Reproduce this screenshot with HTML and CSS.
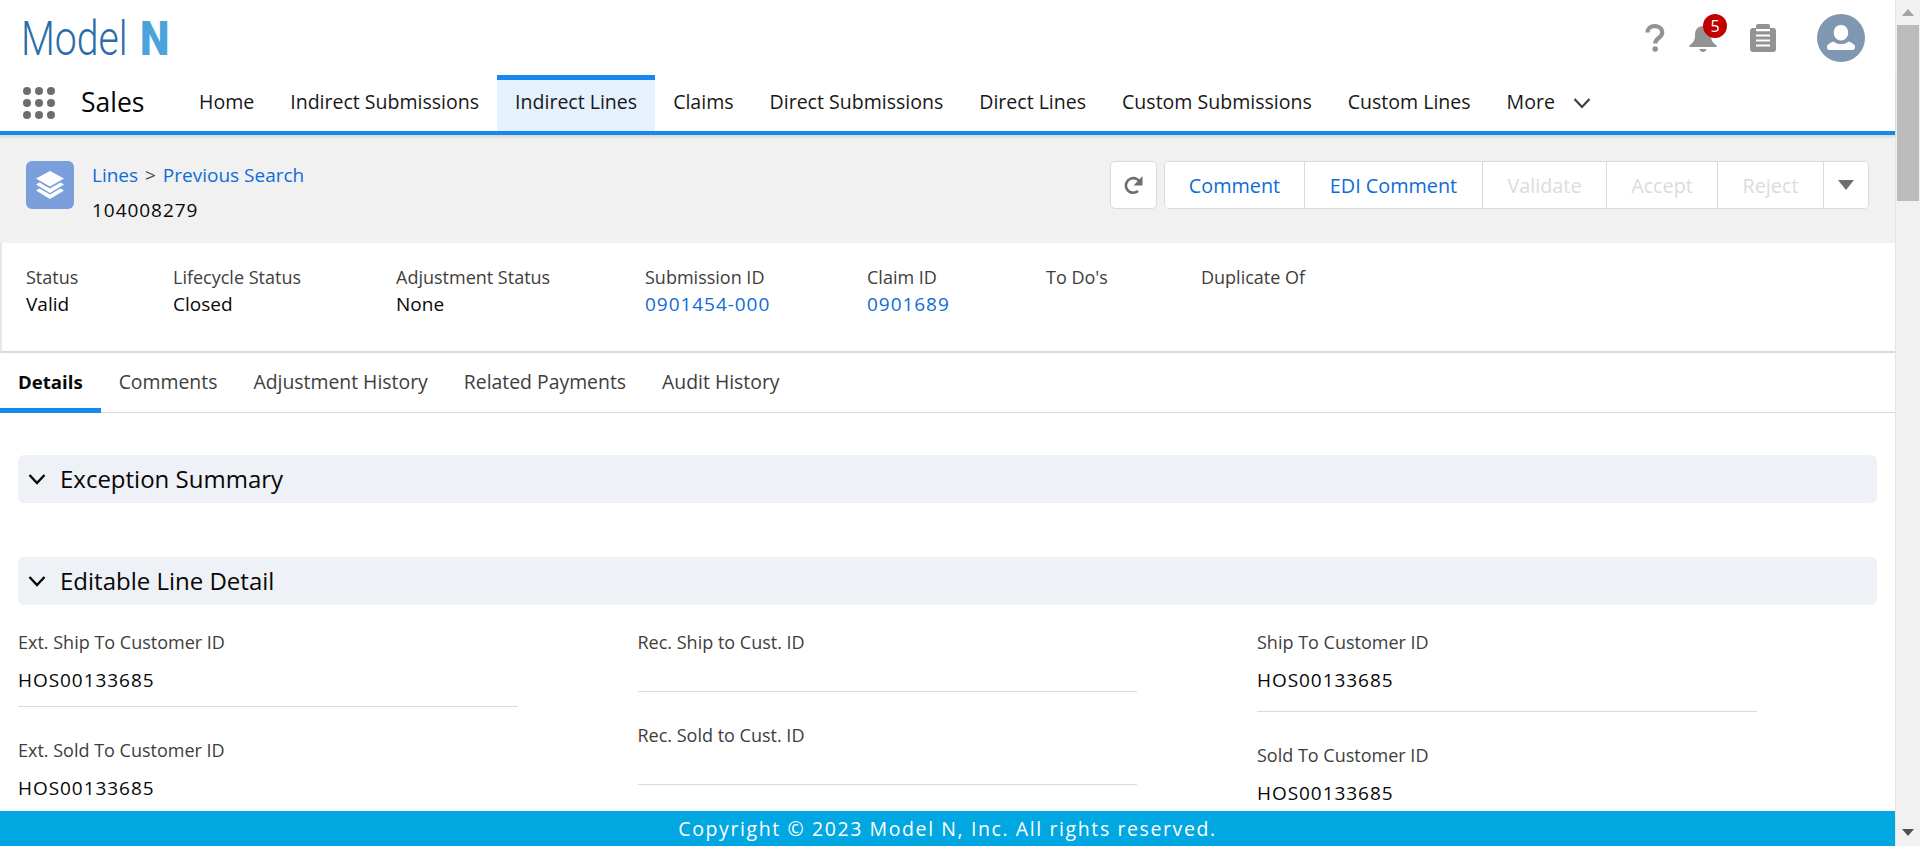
FILE: index.html
```html
<!DOCTYPE html>
<html lang="en">
<head>
<meta charset="utf-8">
<title>Model N - Indirect Lines</title>
<link rel="stylesheet" href="styles.css">
</head>
<body>
<div class="app">
  <div class="main">
    <header class="topbar">
      <div class="logo" aria-label="Model N">
        <span class="logo-model">Model</span>
        <span class="logo-n">N</span>
      </div>
      <div class="top-icons">
        <svg class="ic-help" width="20" height="28" viewBox="0 0 20 28"><path d="M2.500 8.500C2.500 4.500 5.500 2.200 9.600 2.200c4.200 0 7.600 2.400 7.600 6.200 0 5.600-7 5.600-7 11" fill="none" stroke="#939393" stroke-width="4.200"/><circle cx="10.200" cy="25" r="2.800" fill="#939393"/></svg>
        <div class="bell">
          <svg width="28" height="28" viewBox="0 0 28 28"><path d="M14 2c5 0 8 3.500 8 9 0 5 1.500 7.500 4 9.200 1.200.8 1.800 1.300 1.800 2 0 .5-.4.8-1 .8H1.200c-.6 0-1-.3-1-.8 0-.7.6-1.200 1.800-2C4.500 18.500 6 16 6 11c0-5.500 3-9 8-9z" fill="#939393"/><path d="M10.500 25h7c-.4 1.800-1.700 3-3.500 3s-3.100-1.200-3.500-3z" fill="#939393"/></svg>
          <span class="badge">5</span>
        </div>
        <svg class="ic-clip" width="26" height="28" viewBox="0 0 26 28"><path d="M8 0h10a2 2 0 0 1 2 2v2h3a3 3 0 0 1 3 3v18a3 3 0 0 1-3 3H3a3 3 0 0 1-3-3V7a3 3 0 0 1 3-3h3V2a2 2 0 0 1 2-2z" fill="#939393"/><path d="M6 6.200h14M6 11.500h14M6 16.500h14M6 21.500h14" stroke="#fff" stroke-width="2.200"/></svg>
        <svg class="avatar" width="48" height="48" viewBox="0 0 48 48"><circle cx="24" cy="24" r="24" fill="#7f97b0"/><path d="M24 11c4.400 0 7.200 3.400 7.200 7.600 0 4-2.400 8-7.200 8s-7.200-4-7.200-8c0-4.200 2.800-7.600 7.200-7.600zM16.500 27.500c1.800 1.700 4.500 2.600 7.500 2.600s5.700-.9 7.500-2.600c3 1 5.500 2.500 6.500 4.500v1.800c0 1.200-1 2.200-2.200 2.200H12.200c-1.200 0-2.200-1-2.200-2.200V32c1-2 3.500-3.500 6.500-4.500z" fill="#fff"/></svg>
      </div>
    </header>

    <nav class="navbar">
      <svg class="launcher" width="32" height="32" viewBox="0 0 32 32">
        <g fill="#706e6b">
          <circle cx="4" cy="4" r="4"/><circle cx="16" cy="4" r="4"/><circle cx="28" cy="4" r="4"/>
          <circle cx="4" cy="16" r="4"/><circle cx="16" cy="16" r="4"/><circle cx="28" cy="16" r="4"/>
          <circle cx="4" cy="28" r="4"/><circle cx="16" cy="28" r="4"/><circle cx="28" cy="28" r="4"/>
        </g>
      </svg>
      <span class="app-name">Sales</span>
      <ul class="nav-items">
        <li class="nav-item">Home</li>
        <li class="nav-item">Indirect Submissions</li>
        <li class="nav-item is-active">Indirect Lines</li>
        <li class="nav-item">Claims</li>
        <li class="nav-item">Direct Submissions</li>
        <li class="nav-item">Direct Lines</li>
        <li class="nav-item">Custom Submissions</li>
        <li class="nav-item">Custom Lines</li>
        <li class="nav-item nav-more">More
          <svg width="18" height="12" viewBox="0 0 18 12"><path d="M1.500 2l7.500 8 7.500-8" fill="none" stroke="#3e3e3c" stroke-width="2.200"/></svg>
        </li>
      </ul>
    </nav>

    <div class="content">
      <section class="record">
        <div class="record-head">
          <div class="record-title">
            <span class="record-icon">
              <svg width="30" height="29" viewBox="0 0 30 29"><path d="M15 0l14 7.500-14 8-14-8z" fill="#fff"/><path d="M4.500 11.500l10.500 6 10.500-6 3.500 2-14 8.500-14-8.500z" fill="#fff"/><path d="M4.500 17.500l10.500 6 10.500-6 3.500 2-14 8.500-14-8.500z" fill="#fff"/></svg>
            </span>
            <div class="crumbs">
              <div class="crumb-line"><a class="link">Lines</a> <span class="crumb-sep">&gt;</span> <a class="link">Previous Search</a></div>
              <div class="record-id num">104008279</div>
            </div>
          </div>
          <div class="actions">
            <button class="btn btn-icon" type="button" aria-label="Refresh">
              <svg width="20" height="22" viewBox="0 0 20 22"><path d="M16.500 10.500A7.300 7.300 0 1 0 14 17" fill="none" stroke="#706e6b" stroke-width="2.600"/><path d="M18.500 2v9.500H9.500z" fill="#706e6b"/></svg>
            </button>
            <div class="btn-group">
              <button class="btn-seg seg-1" type="button">Comment</button>
              <button class="btn-seg seg-2" type="button">EDI Comment</button>
              <button class="btn-seg seg-3 is-disabled" type="button">Validate</button>
              <button class="btn-seg seg-4 is-disabled" type="button">Accept</button>
              <button class="btn-seg seg-5 is-disabled" type="button">Reject</button>
              <button class="btn-seg seg-6" type="button" aria-label="More actions">
                <svg width="16" height="10" viewBox="0 0 16 10"><path d="M0 0h16L8 10z" fill="#706e6b"/></svg>
              </button>
            </div>
          </div>
        </div>
        <dl class="highlights">
          <div class="hl hl-1"><dt>Status</dt><dd>Valid</dd></div>
          <div class="hl hl-2"><dt>Lifecycle Status</dt><dd>Closed</dd></div>
          <div class="hl hl-3"><dt>Adjustment Status</dt><dd>None</dd></div>
          <div class="hl hl-4"><dt>Submission ID</dt><dd class="link num">0901454-000</dd></div>
          <div class="hl hl-5"><dt>Claim ID</dt><dd class="link num">0901689</dd></div>
          <div class="hl hl-6"><dt>To Do's</dt><dd></dd></div>
          <div class="hl hl-7"><dt>Duplicate Of</dt><dd></dd></div>
        </dl>
      </section>

      <ul class="tabs">
        <li class="tab is-active">Details</li>
        <li class="tab">Comments</li>
        <li class="tab">Adjustment History</li>
        <li class="tab">Related Payments</li>
        <li class="tab">Audit History</li>
      </ul>

      <div class="section-bar section-first">
        <svg width="18" height="12" viewBox="0 0 18 12"><path d="M1.500 2l7.500 8 7.500-8" fill="none" stroke="#080707" stroke-width="2.400"/></svg>
        <h2>Exception Summary</h2>
      </div>
      <div class="section-bar section-second">
        <svg width="18" height="12" viewBox="0 0 18 12"><path d="M1.500 2l7.500 8 7.500-8" fill="none" stroke="#080707" stroke-width="2.400"/></svg>
        <h2>Editable Line Detail</h2>
      </div>

      <div class="fields">
        <div class="field-col">
          <div class="field pad-a"><div class="f-label">Ext. Ship To Customer ID</div><div class="f-value num">HOS00133685</div></div>
          <div class="field pad-a"><div class="f-label">Ext. Sold To Customer ID</div><div class="f-value num">HOS00133685</div></div>
        </div>
        <div class="field-col">
          <div class="field pad-b"><div class="f-label">Rec. Ship to Cust. ID</div><div class="f-value"></div></div>
          <div class="field pad-b"><div class="f-label">Rec. Sold to Cust. ID</div><div class="f-value"></div></div>
        </div>
        <div class="field-col">
          <div class="field pad-c"><div class="f-label">Ship To Customer ID</div><div class="f-value num">HOS00133685</div></div>
          <div class="field pad-c"><div class="f-label">Sold To Customer ID</div><div class="f-value num">HOS00133685</div></div>
        </div>
      </div>
    </div>

    <footer class="footer">Copyright © 2023 Model N, Inc. All rights reserved.</footer>
  </div>

  <div class="scrollbar">
    <span class="sb-arrow sb-up"></span>
    <span class="sb-thumb"></span>
    <span class="sb-arrow sb-down"></span>
  </div>
</div>
</body>
</html>
```

FILE: styles.css
```css
* { box-sizing: border-box; }
html, body { margin: 0; height: 100%; overflow: hidden; }
body { font-family: "Open Sans", "Lato", sans-serif; font-size: 19px; color: #080707; background: #fff; }
ul, dl, dd, h2 { margin: 0; padding: 0; list-style: none; }
button { font: inherit; background: #fff; }
.num { letter-spacing: .95px; }

.app { display: flex; height: 846px; }
.main { flex: 1; min-width: 0; display: flex; flex-direction: column; }

/* top */
.topbar { height: 75px; flex: none; display: flex; justify-content: space-between; padding-left: 21px; }
.logo { margin-top: 16px; display: flex; height: 45px; font-family: "Roboto", sans-serif; font-size: 48px; line-height: 45px; }
.logo-model { display: block; width: 119px; font-weight: 300; color: #2b6cab; transform: scaleX(.815); transform-origin: 0 0; }
.logo-n { display: block; width: 30px; font-weight: 900; color: #4ba3db; transform: scaleX(.87); transform-origin: 0 0; }
.top-icons { display: flex; align-items: flex-start; padding-right: 30px; padding-top: 14px; }
.ic-help { margin-top: 10px; }
.bell { position: relative; width: 28px; height: 28px; margin-top: 10px; margin-left: 24px; }
.bell svg { display: block; }
.badge { position: absolute; left: 14px; top: -10px; width: 24px; height: 24px; border-radius: 50%; background: #c00000; color: #fff; font-size: 16px; line-height: 24px; text-align: center; }
.ic-clip { margin-top: 10px; margin-left: 33px; }
.avatar { margin-left: 41px; }

/* nav */
.navbar { height: 60px; flex: none; display: flex; align-items: stretch; border-bottom: 4px solid #1589ee; padding-left: 23px; position: relative; z-index: 1; box-shadow: 0 2px 3px rgba(0,0,0,.12); }
.launcher { align-self: center; margin-top: -1px; flex: none; }
.app-name { align-self: center; margin-left: 26px; font-size: 26.500px; width: 100px; flex: none; margin-top: -3px; }
.nav-items { display: flex; align-items: stretch; }
.nav-item { display: flex; align-items: center; padding: 0 18px 8px; border-top: 5px solid transparent; white-space: nowrap; color: #181818; font-size: 19.550px; }
.nav-item.is-active { background: #e5f1fc; border-top-color: #1589ee; }
.nav-more svg { margin-left: 18px; margin-top: 3px; }

/* content */
.content { flex: 1; min-height: 0; overflow: hidden; }
.link { color: #0f6bd7; }

.record { border-bottom: 2px solid #dddbda; border-left: 2px solid #e6e6e6; }
.record-head { height: 108px; margin-left: -2px; background: #f1f1f1; display: flex; justify-content: space-between; padding: 26px 26px 0 26px; }
.record-title { display: flex; gap: 18px; }
.record-icon { width: 48px; height: 48px; border-radius: 6px; background: #7b9fdb; display: flex; align-items: center; justify-content: center; }
.crumbs { line-height: 24px; margin-top: 2px; }
.crumb-sep { color: #3e3e3c; margin: 0 2px; }
.record-id { margin-top: 11px; }
.actions { display: flex; gap: 7px; }
.btn { border: 1px solid #dddbda; border-radius: 5px; width: 47px; height: 48px; padding: 0; display: flex; align-items: center; justify-content: center; background: #fff; }
.btn-group { display: flex; height: 48px; width: 705px; border: 1px solid #dddbda; border-radius: 5px; background: #fff; overflow: hidden; }
.btn-seg { border: 0; border-left: 1px solid #dddbda; padding: 0; color: #0f6bd7; font-size: 19.800px; display: flex; align-items: center; justify-content: center; }
.btn-seg:first-child { border-left: 0; }
.is-disabled { color: #dddbda; }
.seg-1 { width: 139px; }
.seg-2 { width: 178px; }
.seg-3 { width: 124px; }
.seg-4 { width: 111px; }
.seg-5 { width: 106px; }
.seg-6 { flex: 1; }

.highlights { height: 108px; display: flex; padding-top: 22px; line-height: 24px; }
.hl { width: 0; white-space: nowrap; }
.hl dt { color: #3e3e3c; font-size: 18px; }
.hl dd { margin-top: 3px; }
.hl-1 { margin-left: 24px; }
.hl-2 { margin-left: 147px; }
.hl-3 { margin-left: 223px; }
.hl-4 { margin-left: 249px; }
.hl-5 { margin-left: 222px; }
.hl-6 { margin-left: 179px; }
.hl-7 { margin-left: 155px; }

.tabs { height: 60px; display: flex; border-bottom: 1px solid #dddbda; }
.tab { padding: 0 18px; display: flex; align-items: center; color: #3e3e3c; font-size: 19.400px; margin-bottom: -1px; border-bottom: 5px solid transparent; padding-top: 2px; }
.tab.is-active { color: #080707; font-weight: 700; font-size: 18.600px; border-bottom-color: #1589ee; }

.section-bar { height: 48px; margin-left: 18px; margin-right: 18px; background: #eef1f6; border-radius: 6px; display: flex; align-items: center; padding-left: 10px; }
.section-bar h2 { font-size: 24px; font-weight: 400; margin-left: 14px; margin-top: -2px; }
.section-first { margin-top: 42px; }
.section-second { margin-top: 54px; }

.fields { display: grid; grid-template-columns: repeat(3, 499.500px); column-gap: 120px; padding-left: 18px; padding-top: 26px; }
.field-col { display: flex; flex-direction: column; gap: 32px; }
.field { border-bottom: 1px solid #dddbda; }
.pad-a { padding-bottom: 14px; }
.pad-b { padding-bottom: 0; }
.pad-c { padding-bottom: 19px; }
.f-label { font-size: 18px; line-height: 24px; color: #3e3e3c; margin-top: -1px; margin-bottom: 1px; }
.f-value { margin-top: 14px; line-height: 24px; min-height: 23px; }

.footer { height: 35px; flex: none; background: #00a7e1; color: #fff; text-align: center; line-height: 35px; font-size: 19.500px; letter-spacing: 1.600px; }

/* scrollbar */
.scrollbar { width: 25px; flex: none; background: #f1f1f1; position: relative; border-left: 1px solid #e4e4e4; }
.sb-thumb { position: absolute; left: 1px; right: 1px; top: 25px; height: 176px; background: #bcbcbc; }
.sb-arrow { position: absolute; left: 6px; width: 0; height: 0; border-left: 6px solid transparent; border-right: 6px solid transparent; }
.sb-up { top: 9px; border-bottom: 7px solid #a3a3a3; }
.sb-down { bottom: 10px; border-top: 7px solid #505050; }
```
